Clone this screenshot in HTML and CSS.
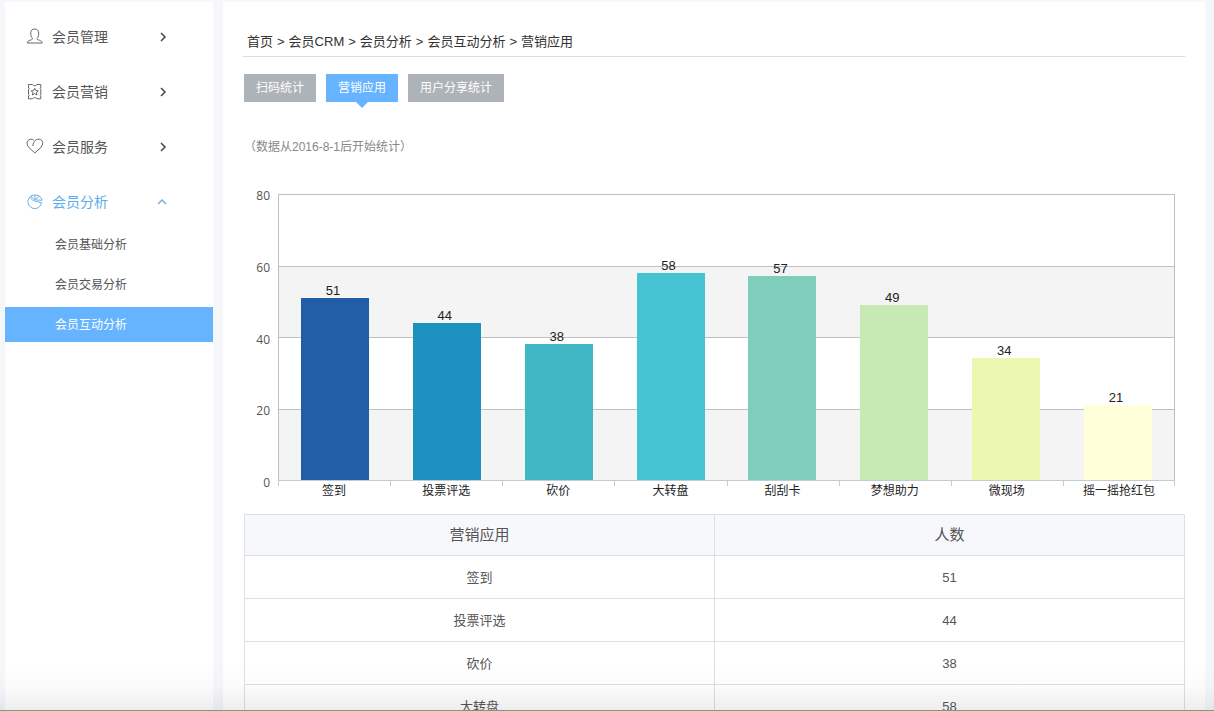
FILE: index.html
```html
<!DOCTYPE html>
<html lang="zh-CN">
<head>
<meta charset="utf-8">
<title>营销应用</title>
<link rel="stylesheet" href="styles.css">
</head>
<body>
<div class="shell">
  <nav class="sidebar">
    <ul class="menu">
      <li><a class="menu-item" href="#">
        <svg class="menu-icon" viewBox="0 0 18 18"><path d="M6.500 10.500 C5.300 9.300 4.700 7.500 4.700 5 C4.700 2.500 6.200 1 8.700 1 C11.200 1 12.700 2.500 12.700 5 C12.700 7.500 12.200 9.300 11 10.500 C10.600 12.500 16 11.500 16.200 15 H1.300 C1.500 11.500 6.900 12.500 6.500 10.500 Z"/></svg>
        <span class="menu-text">会员管理</span>
        <svg class="chevron" viewBox="0 0 10 10"><path d="M3 1 L7 5 L3 9"/></svg></a></li>
      <li><a class="menu-item" href="#">
        <svg class="menu-icon" viewBox="0 0 18 18"><path d="M2.500 1.500 H6.500 C7 3.200 10.300 3.200 10.800 1.500 H14.800 V5 L14 5.800 L14.800 6.600 V11.400 L14 12.200 L14.800 13 V15.800 H10.800 C10.300 14.200 7 14.200 6.500 15.800 H2.500 V13 L3.300 12.200 L2.500 11.400 V6.600 L3.300 5.800 L2.500 5 Z"/><path d="M8.700 5.300 L9.800 7.600 L12.300 7.900 L10.400 9.500 L11 12 L8.700 10.700 L6.400 12 L7 9.500 L5.100 7.900 L7.600 7.600 Z"/></svg>
        <span class="menu-text">会员营销</span>
        <svg class="chevron" viewBox="0 0 10 10"><path d="M3 1 L7 5 L3 9"/></svg></a></li>
      <li><a class="menu-item" href="#">
        <svg class="menu-icon" viewBox="0 0 18 18"><path d="M6.800 8 C7 5.500 8 3.400 9.500 2.200 C11.500 0.600 14.500 0.700 16 2.700 C17.300 4.700 16.700 7.200 15 9.300 L8.800 15 L2.800 9.300 C0.900 7.200 0.500 4.700 1.700 2.900 C3.100 0.900 6 0.700 7.800 2"/></svg>
        <span class="menu-text">会员服务</span>
        <svg class="chevron" viewBox="0 0 10 10"><path d="M3 1 L7 5 L3 9"/></svg></a></li>
      <li><a class="menu-item open" href="#">
        <svg class="menu-icon" viewBox="0 0 18 18"><path d="M7 2.200 A6.800 6.800 0 1 0 15.500 9.500 L9.500 8.500 C7.500 7.800 5.500 6.500 4.200 4.500"/><path d="M5 3.500 C8 1 14.500 1 16 7.300 L9.800 7 C8 6.300 6.300 5 5 3.500 Z"/><path d="M9 2 V6.500 M9.500 6.500 L13 3.200"/></svg>
        <span class="menu-text">会员分析</span>
        <svg class="chevron" viewBox="0 0 10 10"><path d="M0 7 L4 3 L8 7"/></svg></a>
        <ul class="submenu">
          <li><a class="sub-item" href="#">会员基础分析</a></li>
          <li><a class="sub-item" href="#">会员交易分析</a></li>
          <li><a class="sub-item active" href="#">会员互动分析</a></li>
        </ul>
      </li>
    </ul>
  </nav>
  <main class="content">
    <div class="crumbs"><a href="#">首页</a><span>&gt;</span><a href="#">会员CRM</a><span>&gt;</span><a href="#">会员分析</a><span>&gt;</span><a href="#">会员互动分析</a><span>&gt;</span><a href="#">营销应用</a></div>
    <div class="tabs">
      <button class="tab" type="button">扫码统计</button>
      <button class="tab selected" type="button">营销应用</button>
      <button class="tab" type="button">用户分享统计</button>
    </div>
    <p class="note">（数据从2016-8-1后开始统计）</p>
    <section class="chart">
      <div class="y-axis"><span>80</span><span>60</span><span>40</span><span>20</span><span>0</span></div>
      <div class="plot">
        <div class="bands"><div class="band"></div><div class="band"></div><div class="band"></div><div class="band"></div></div>
        <div class="bars">
          <div class="column"><span class="value">51</span><div class="bar c1" style="height:63.75%"></div></div>
          <div class="column"><span class="value">44</span><div class="bar c2" style="height:55%"></div></div>
          <div class="column"><span class="value">38</span><div class="bar c3" style="height:47.5%"></div></div>
          <div class="column"><span class="value">58</span><div class="bar c4" style="height:72.5%"></div></div>
          <div class="column"><span class="value">57</span><div class="bar c5" style="height:71.25%"></div></div>
          <div class="column"><span class="value">49</span><div class="bar c6" style="height:61.25%"></div></div>
          <div class="column"><span class="value">34</span><div class="bar c7" style="height:42.5%"></div></div>
          <div class="column"><span class="value">21</span><div class="bar c8" style="height:26.25%"></div></div>
        </div>
      </div>
      <div class="x-axis"><span>签到</span><span>投票评选</span><span>砍价</span><span>大转盘</span><span>刮刮卡</span><span>梦想助力</span><span>微现场</span><span>摇一摇抢红包</span></div>
    </section>
    <table class="stats">
      <thead><tr><th>营销应用</th><th>人数</th></tr></thead>
      <tbody>
        <tr><td>签到</td><td>51</td></tr>
        <tr><td>投票评选</td><td>44</td></tr>
        <tr><td>砍价</td><td>38</td></tr>
        <tr><td>大转盘</td><td>58</td></tr>
      </tbody>
    </table>
  </main>
</div>
<div class="fade"></div>
</body>
</html>
```
FILE: styles.css
```css
* { box-sizing: border-box; }
body {
  margin: 0;
  background: #f6f7fb;
  color: #555;
  font: 13px/20px "Liberation Sans", "Noto Sans CJK SC", sans-serif;
}
a { color: inherit; text-decoration: none; }
ul { list-style: none; margin: 0; padding: 0; }

.shell {
  display: flex;
  gap: 10px;
  height: 100vh;
  padding: 2px 9px 0 5px;
  overflow: hidden;
}
.sidebar { flex: 0 0 208px; background: #fff; padding-top: 17px; }
.menu { display: flex; flex-direction: column; gap: 20px; }
.menu-item {
  display: flex;
  align-items: center;
  height: 35px;
  padding: 0 45px 0 21px;
  font-size: 14px;
}
.menu-icon { width: 18px; height: 18px; margin-right: 8px; fill: none; stroke: #666; stroke-width: 1; }
.menu-text { flex: 1; }
.chevron { width: 10px; height: 10px; fill: none; stroke: #444; stroke-width: 1.500; }
.open { color: #5cabec; }
.open .menu-icon, .open .chevron { stroke: #6cb0e8; }
.submenu { display: flex; flex-direction: column; gap: 5px; margin-top: 8px; }
.sub-item { display: block; padding: 1px 0 0 50px; font-size: 12px; line-height: 34px; }
.sub-item.active { background: #66b3ff; color: #fff; }

.content { flex: 1; min-width: 0; background: #fff; padding: 30px 20px 0 21px; }
.crumbs {
  display: flex;
  gap: 4px;
  height: 25px;
  margin-left: -1px;
  padding-left: 4px;
  border-bottom: 1px solid #ddd;
  color: #333;
}
.tabs { display: flex; gap: 10px; margin-top: 17px; }
.tab {
  position: relative;
  height: 28px;
  padding: 0 12px;
  border: 0;
  background: #adb3b9;
  color: #fff;
  font: inherit;
  font-size: 12px;
}
.tab.selected { background: #66b3ff; }
.tab.selected::after {
  content: "";
  position: absolute;
  top: 100%;
  left: 50%;
  margin-left: -6px;
  border: 6px solid transparent;
  border-top-color: #66b3ff;
  border-bottom: 0;
}
.note { margin: 35px 0 0; color: #888; font-size: 12px; }

.chart {
  display: grid;
  grid-template-columns: 26px 1fr;
  column-gap: 8px;
  margin: 37px 10px 0 0;
}
.y-axis {
  display: flex;
  flex-direction: column;
  justify-content: space-between;
  margin: -6px 0 -10px;
  text-align: right;
  font: 12px/16px "Open Sans", "Noto Sans", sans-serif;
}
.plot {
  display: grid;
  height: 287px;
  border: solid #c0c0c0;
  border-width: 0 1px;
  border-bottom: 1px solid #c0ccd4;
}
.bands, .bars { grid-area: 1 / 1; display: flex; min-height: 0; }
.bands { flex-direction: column; }
.band { flex: 1; border-top: 1px solid #c0c0c0; }
.band:nth-child(even) { background: #f4f4f4; }
.column {
  flex: 1;
  display: flex;
  flex-direction: column;
  align-items: center;
  justify-content: flex-end;
}
.value { padding-right: 4px; color: #222; line-height: 14px; }
.bar { flex: none; width: 68px; }
.c1 { background: #225ea8; }
.c2 { background: #1d91c0; }
.c3 { background: #41b6c4; }
.c4 { background: #45c3d2; }
.c5 { background: #7fcdbb; }
.c6 { background: #c7e9b4; }
.c7 { background: #ecf8b1; }
.c8 { background: #ffffd9; }
.x-axis {
  grid-column: 2;
  display: flex;
  background: linear-gradient(#c0ccd4, #c0ccd4) right top / 1px 5px no-repeat;
  color: #222;
  font-size: 12px;
}
.x-axis span {
  flex: 1 0 0;
  text-align: center;
  background: linear-gradient(#c0ccd4, #c0ccd4) left top / 1px 5px no-repeat;
}

.stats {
  width: 100%;
  margin-top: 13px;
  table-layout: fixed;
  border-collapse: collapse;
  text-align: center;
}
.stats th, .stats td { border: 1px solid #dcdfe3; padding: 0; }
.stats th { height: 41px; background: #f6f8fc; font-size: 15px; font-weight: normal; }
.stats td { height: 43px; padding-top: 2px; }

.fade {
  position: fixed;
  inset: auto 0 0;
  height: 48px;
  border-bottom: 1px solid #7f9a6c;
  background: linear-gradient(rgba(60, 60, 70, 0), rgba(60, 60, 70, 0.020) 50%, rgba(60, 60, 70, 0.090));
  pointer-events: none;
}
```
